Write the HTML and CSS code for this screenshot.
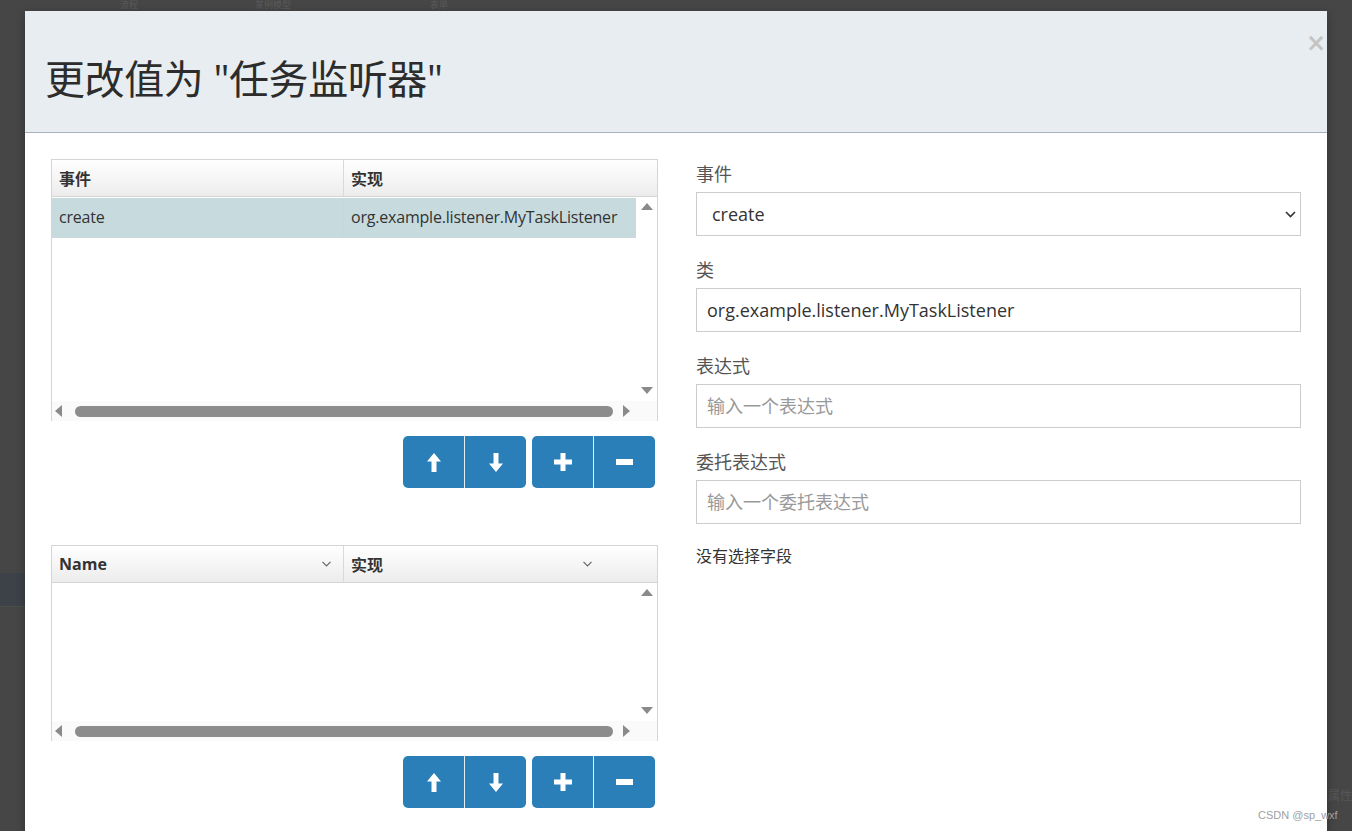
FILE: index.html
```html
<!DOCTYPE html>
<html lang="zh-CN">
<head>
<meta charset="utf-8">
<title>更改值为 "任务监听器"</title>
<link rel="stylesheet" href="styles.css">
</head>
<body>
<div class="page">
  <div class="bg-top"><span class="bg-t1">流程</span><span class="bg-t2">某例模型</span><span class="bg-t3">表单</span></div>
  <div class="bg-band"></div>
  <div class="bg-right">属性</div>
  <div class="modal">
    <div class="modal-header">
      <h1 class="modal-title">更改值为 "任务监听器"</h1>
      <span class="close">&times;</span>
    </div>
    <div class="modal-body">
      <div class="left">
        <div class="grid grid-main">
          <div class="grid-head">
            <div class="hcell c1">事件</div>
            <div class="hcell c2">实现</div>
          </div>
          <div class="grid-body">
            <div class="viewport">
              <div class="row selected">
                <div class="cell c1">create</div>
                <div class="cell c2">org.example.listener.MyTaskListener</div>
              </div>
            </div>
            <div class="vscroll">
              <svg class="tri" width="12" height="7" viewBox="0 0 12 7"><path d="M6 0L12 7H0Z"/></svg>
              <svg class="tri" width="12" height="7" viewBox="0 0 12 7"><path d="M0 0H12L6 7Z"/></svg>
            </div>
            <div class="hscroll">
              <svg class="tri" width="7" height="12" viewBox="0 0 7 12"><path d="M7 0V12L0 6Z"/></svg>
              <div class="thumb"></div>
              <svg class="tri" width="7" height="12" viewBox="0 0 7 12"><path d="M0 0L7 6L0 12Z"/></svg>
            </div>
            <div class="corner"></div>
          </div>
        </div>
        <div class="toolbar">
          <div class="btn-group">
            <button class="btn"><svg width="14" height="19" viewBox="0 0 14 19"><path d="M7 0L14 8.5H9.5V19H4.5V8.5H0Z"/></svg></button>
            <button class="btn"><svg width="14" height="19" viewBox="0 0 14 19"><path d="M4.5 0H9.5V10.5H14L7 19L0 10.5H4.5Z"/></svg></button>
          </div>
          <div class="btn-group">
            <button class="btn"><svg width="18" height="18" viewBox="0 0 18 18"><path d="M6.5 0H11.5V6.5H18V11.5H11.5V18H6.5V11.5H0V6.5H6.5Z"/></svg></button>
            <button class="btn"><svg width="17" height="6" viewBox="0 0 17 6"><path d="M0 0H17V6H0Z"/></svg></button>
          </div>
        </div>

        <div class="grid grid-fields">
          <div class="grid-head">
            <div class="hcell c1">Name<svg class="chev" width="9" height="6" viewBox="0 0 9 6"><path d="M0.5 0.8L4.5 4.8L8.5 0.8" fill="none" stroke="#666" stroke-width="1.2"/></svg></div>
            <div class="hcell c2">实现<svg class="chev" width="9" height="6" viewBox="0 0 9 6"><path d="M0.5 0.8L4.5 4.8L8.5 0.8" fill="none" stroke="#666" stroke-width="1.2"/></svg></div>
          </div>
          <div class="grid-body">
            <div class="viewport"></div>
            <div class="vscroll">
              <svg class="tri" width="12" height="7" viewBox="0 0 12 7"><path d="M6 0L12 7H0Z"/></svg>
              <svg class="tri" width="12" height="7" viewBox="0 0 12 7"><path d="M0 0H12L6 7Z"/></svg>
            </div>
            <div class="hscroll">
              <svg class="tri" width="7" height="12" viewBox="0 0 7 12"><path d="M7 0V12L0 6Z"/></svg>
              <div class="thumb"></div>
              <svg class="tri" width="7" height="12" viewBox="0 0 7 12"><path d="M0 0L7 6L0 12Z"/></svg>
            </div>
            <div class="corner"></div>
          </div>
        </div>
        <div class="toolbar">
          <div class="btn-group">
            <button class="btn"><svg width="14" height="19" viewBox="0 0 14 19"><path d="M7 0L14 8.5H9.5V19H4.5V8.5H0Z"/></svg></button>
            <button class="btn"><svg width="14" height="19" viewBox="0 0 14 19"><path d="M4.5 0H9.5V10.5H14L7 19L0 10.5H4.5Z"/></svg></button>
          </div>
          <div class="btn-group">
            <button class="btn"><svg width="18" height="18" viewBox="0 0 18 18"><path d="M6.5 0H11.5V6.5H18V11.5H11.5V18H6.5V11.5H0V6.5H6.5Z"/></svg></button>
            <button class="btn"><svg width="17" height="6" viewBox="0 0 17 6"><path d="M0 0H17V6H0Z"/></svg></button>
          </div>
        </div>
      </div>

      <div class="right">
        <div class="form-group">
          <label class="label">事件</label>
          <div class="select-wrap">
            <select class="control select"><option>create</option></select>
            <svg class="select-chev" width="11" height="7" viewBox="0 0 11 7"><path d="M1 1L5.5 5.5L10 1" fill="none" stroke="#333" stroke-width="1.6"/></svg>
          </div>
        </div>
        <div class="form-group">
          <label class="label">类</label>
          <input class="control" type="text" value="org.example.listener.MyTaskListener">
        </div>
        <div class="form-group">
          <label class="label">表达式</label>
          <input class="control" type="text" placeholder="输入一个表达式">
        </div>
        <div class="form-group">
          <label class="label">委托表达式</label>
          <input class="control" type="text" placeholder="输入一个委托表达式">
        </div>
        <p class="no-field">没有选择字段</p>
      </div>
    </div>
  </div>
  <div class="watermark">CSDN @sp_wxf</div>
</div>
</body>
</html>
```

FILE: styles.css
```css
html, body {
  margin: 0;
  padding: 0;
  height: 100%;
  overflow: hidden;
}
body {
  background: #464646;
  font-family: "Open Sans", "Noto Sans CJK SC", sans-serif;
  color: #333;
}
.page {
  position: relative;
  height: 831px;
  padding: 11px 0 0 25px;
  box-sizing: border-box;
}
.bg-top {
  position: absolute;
  left: 0;
  top: 0;
  width: 100%;
  height: 11px;
  font-size: 9px;
  line-height: 10px;
  color: #5a5a5a;
}
.bg-t1 { position: absolute; left: 120px; top: 0; }
.bg-t2 { position: absolute; left: 255px; top: 0; }
.bg-t3 { position: absolute; left: 430px; top: 0; }
.bg-band {
  position: absolute;
  left: 0;
  top: 573px;
  width: 25px;
  height: 33px;
  background: #3d4248;
  border-bottom: 1px solid #4a5048;
}
.bg-right {
  position: absolute;
  left: 1328px;
  top: 788px;
  font-size: 12px;
  line-height: 16px;
  white-space: nowrap;
  color: #575757;
}
.modal {
  position: relative;
  width: 1302px;
  height: 900px;
  background: #fff;
  box-shadow: 0 3px 9px rgba(0,0,0,0.3);
}
.modal-header {
  position: relative;
  height: 122px;
  background: #e8edf1;
  border-bottom: 1px solid #a9b1bf;
  padding: 44px 20px 0 20px;
  box-sizing: border-box;
}
.modal-title {
  margin: 0;
  font-size: 40px;
  line-height: 48px;
  font-weight: normal;
  color: #2c2c2c;
  letter-spacing: -0.4px;
}
.close {
  position: absolute;
  right: 1px;
  top: 20px;
  font-size: 24px;
  line-height: 24px;
  font-weight: bold;
  color: #c4c4c4;
  font-family: "DejaVu Sans", sans-serif;
}
.modal-body {
  display: flex;
  padding: 26px 26px 0 26px;
}
.left {
  width: 607px;
  flex: none;
}
.right {
  flex: 1;
  margin-left: 38px;
  padding-top: 2px;
}

/* grid */
.grid {
  border: 1px solid #d5d5d5;
  border-bottom: none;
  display: flex;
  flex-direction: column;
  box-sizing: border-box;
}
.grid-main { height: 262px; }
.grid-fields { height: 196px; margin-top: 57px; }
.grid-head {
  display: flex;
  height: 36px;
  flex: none;
  background: linear-gradient(#ffffff, #ececec);
  border-bottom: 1px solid #d5d5d5;
}
.hcell {
  display: flex;
  align-items: center;
  justify-content: space-between;
  padding: 0 12px 0 7px;
  font-size: 16px;
  font-weight: bold;
  color: #333;
  box-sizing: border-box;
}
.c1 { width: 292px; flex: none; border-right: 1px solid #d9d9d9; }
.c2 { flex: 1; }
.hcell.c2 { padding-right: 65px; }
.chev { flex: none; }
.grid-body {
  flex: 1;
  display: grid;
  grid-template-columns: 1fr 21px;
  grid-template-rows: 1fr 20px;
}
.viewport {
  padding-top: 1px;
}
.row {
  display: flex;
  height: 40px;
  align-items: center;
  font-size: 16px;
  color: #333;
  letter-spacing: -0.2px;
}
.row.selected { background: #c7dbdf; }
.cell {
  height: 100%;
  display: flex;
  align-items: center;
  padding-left: 7px;
  padding-bottom: 3px;
  box-sizing: border-box;
}
.cell.c1 { border-right: 1px solid #dccfd0; }
.tri { fill: #8a8a8a; display: block; }
.vscroll {
  display: flex;
  flex-direction: column;
  justify-content: space-between;
  align-items: center;
  padding: 6px 0 7px 0;
}
.hscroll {
  display: flex;
  align-items: center;
  padding: 0 6px 0 3px;
  background: #fafafa;
}
.thumb {
  flex: 1;
  height: 11px;
  border-radius: 6px;
  background: #8c8c8c;
  margin: 0 10px 0 13px;
}
.corner { background: #fafafa; }

/* toolbar */
.toolbar {
  display: flex;
  justify-content: flex-end;
  gap: 6px;
  margin-top: 15px;
  padding-right: 3px;
}
.btn-group {
  display: flex;
  border-radius: 5px;
  overflow: hidden;
}
.btn {
  width: 61px;
  height: 52px;
  border: none;
  margin: 0;
  padding: 0;
  background: #2a7fb9;
  display: flex;
  align-items: center;
  justify-content: center;
  fill: #fff;
}
.btn + .btn { border-left: 1px solid #e6eef5; width: 62px; }

/* form */
.form-group {
  margin-bottom: 21px;
}
.label {
  display: block;
  font-size: 18px;
  line-height: 26px;
  color: #555;
  margin-bottom: 5px;
}
.control {
  display: block;
  width: 100%;
  height: 44px;
  box-sizing: border-box;
  border: 1px solid #cccccc;
  border-radius: 0;
  padding: 0 10px;
  font-family: "Open Sans", "Noto Sans CJK SC", sans-serif;
  font-size: 18px;
  color: #333;
  background: #fff;
  outline: none;
}
.control::placeholder { color: #999; }
.select-wrap { position: relative; }
.select {
  appearance: none;
  -webkit-appearance: none;
  padding-left: 15px;
}
.select-chev {
  position: absolute;
  right: 5px;
  top: 19px;
}
.no-field {
  margin: 0;
  padding-top: 1px;
  font-size: 16px;
  line-height: 20px;
  color: #333;
}
.watermark {
  position: absolute;
  left: 1258px;
  top: 809px;
  font-size: 11px;
  color: #a0a0a0;
  font-family: "Liberation Sans", sans-serif;
}
```
